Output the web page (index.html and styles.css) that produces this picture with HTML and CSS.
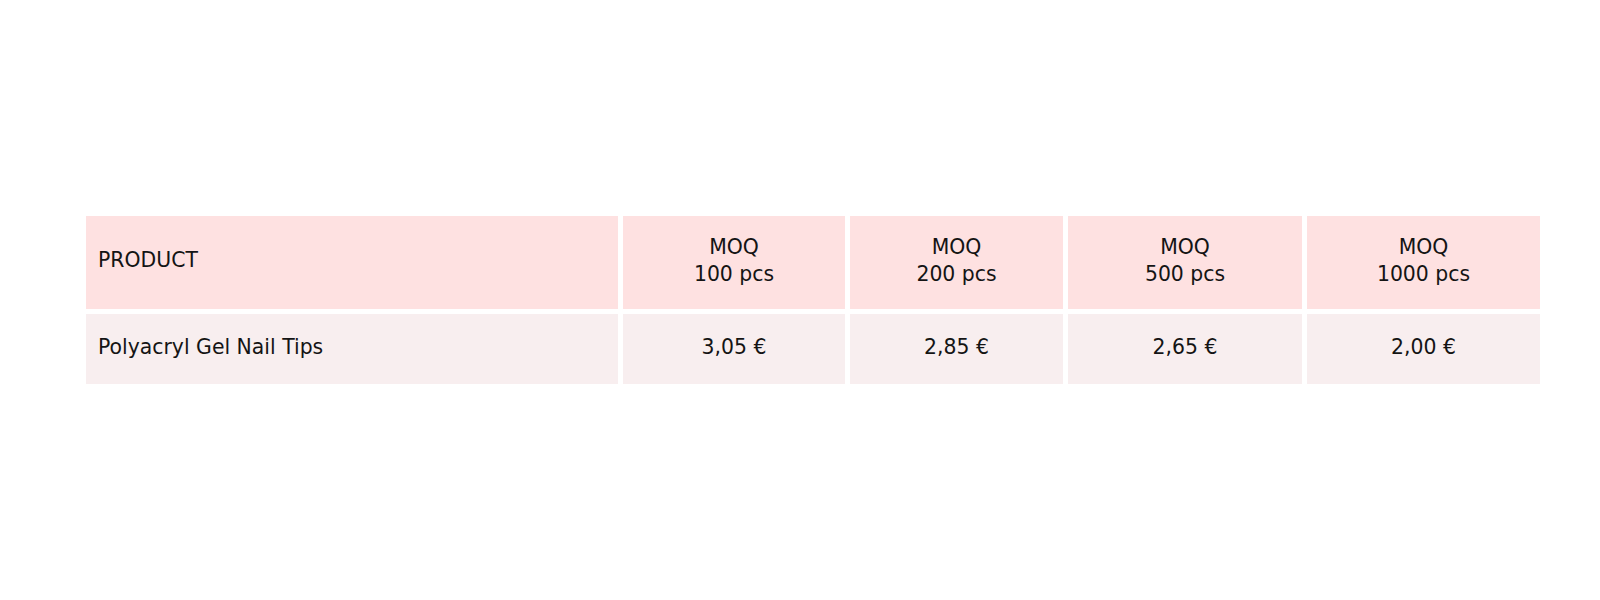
FILE: index.html
```html
<!DOCTYPE html>
<html lang="en">
<head>
<meta charset="utf-8">
<title>Price table</title>
<link rel="stylesheet" href="styles.css">
</head>
<body>
<div class="page">
  <table class="prices">
    <colgroup>
      <col class="c-product">
      <col class="c-100">
      <col class="c-200">
      <col class="c-500">
      <col class="c-1000">
    </colgroup>
    <thead>
      <tr>
        <th class="name">PRODUCT</th>
        <th>MOQ<br>100 pcs</th>
        <th>MOQ<br>200 pcs</th>
        <th>MOQ<br>500 pcs</th>
        <th>MOQ<br>1000 pcs</th>
      </tr>
    </thead>
    <tbody>
      <tr>
        <td class="name">Polyacryl Gel Nail Tips</td>
        <td>3,05 €</td>
        <td>2,85 €</td>
        <td>2,65 €</td>
        <td>2,00 €</td>
      </tr>
    </tbody>
  </table>
</div>
</body>
</html>
```

FILE: styles.css
```css
html, body {
  margin: 0;
  padding: 0;
  background: #ffffff;
}

.page {
  padding: 211px 0 0 81px;
}

.prices {
  width: 1464px;
  table-layout: fixed;
  border-collapse: separate;
  border-spacing: 5px;
  font-family: "DejaVu Sans", "Open Sans", sans-serif;
  font-size: 20.4px;
  line-height: 27px;
  color: #141414;
}

.c-product { width: 532px; }
.c-100 { width: 222px; }
.c-200 { width: 213px; }
.c-500 { width: 234px; }
.c-1000 { width: 233px; }

.prices th,
.prices td {
  padding: 0 12px 4px;
  text-align: center;
  vertical-align: middle;
  font-weight: normal;
}

.prices th {
  height: 89px;
  background: #fee1e1;
}

.prices td {
  height: 66px;
  background: #f8eeef;
}

.prices .name {
  text-align: left;
}
```
